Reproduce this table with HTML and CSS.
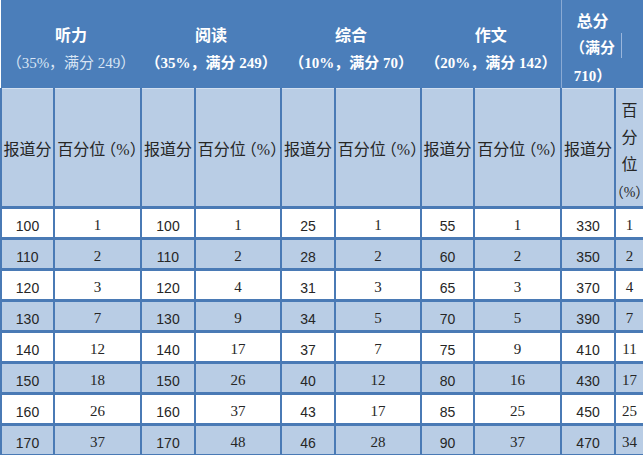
FILE: index.html
```html
<!DOCTYPE html>
<html lang="zh">
<head>
<meta charset="utf-8">
<title>报道分与百分位</title>
<link rel="stylesheet" href="styles.css">
</head>
<body>
<table class="score-table">
  <colgroup>
    <col class="c-score"><col class="c-pct">
    <col class="c-score2"><col class="c-pct2">
    <col class="c-score2"><col class="c-pct2">
    <col class="c-score"><col class="c-pct">
    <col class="c-score2"><col class="c-last">
  </colgroup>
  <thead>
    <tr class="head1">
      <th colspan="2"><div class="cell"><div class="title">听力</div><div class="sub light">（35%，满分 249）</div></div></th>
      <th colspan="2"><div class="cell"><div class="title">阅读</div><div class="sub">（35%，满分 249）</div></div></th>
      <th colspan="2"><div class="cell"><div class="title">综合</div><div class="sub">（10%，满分 70）</div></div></th>
      <th colspan="2" class="divide"><div class="cell"><div class="title">作文</div><div class="sub">（20%，满分 142）</div></div></th>
      <th colspan="2"><div class="cell total"><div class="title">总分</div><div class="sub mark">（满分</div><div class="sub">710）</div></div></th>
    </tr>
    <tr class="head2">
      <th>报道分</th><th>百分位<span class="paren">（%）</span></th>
      <th>报道分</th><th>百分位<span class="paren">（%）</span></th>
      <th>报道分</th><th>百分位<span class="paren">（%）</span></th>
      <th>报道分</th><th>百分位<span class="paren">（%）</span></th>
      <th>报道分</th><th class="wrap">百分位<span class="narrow">（%）</span></th>
    </tr>
  </thead>
  <tbody>
    <tr class="odd"><td class="n">100</td><td class="p">1</td><td class="n">100</td><td class="p">1</td><td class="n">25</td><td class="p">1</td><td class="n">55</td><td class="p">1</td><td class="n">330</td><td class="p">1</td></tr>
    <tr class="even"><td class="n">110</td><td class="p">2</td><td class="n">110</td><td class="p">2</td><td class="n">28</td><td class="p">2</td><td class="n">60</td><td class="p">2</td><td class="n">350</td><td class="p">2</td></tr>
    <tr class="odd"><td class="n">120</td><td class="p">3</td><td class="n">120</td><td class="p">4</td><td class="n">31</td><td class="p">3</td><td class="n">65</td><td class="p">3</td><td class="n">370</td><td class="p">4</td></tr>
    <tr class="even"><td class="n">130</td><td class="p">7</td><td class="n">130</td><td class="p">9</td><td class="n">34</td><td class="p">5</td><td class="n">70</td><td class="p">5</td><td class="n">390</td><td class="p">7</td></tr>
    <tr class="odd"><td class="n">140</td><td class="p">12</td><td class="n">140</td><td class="p">17</td><td class="n">37</td><td class="p">7</td><td class="n">75</td><td class="p">9</td><td class="n">410</td><td class="p">11</td></tr>
    <tr class="even"><td class="n">150</td><td class="p">18</td><td class="n">150</td><td class="p">26</td><td class="n">40</td><td class="p">12</td><td class="n">80</td><td class="p">16</td><td class="n">430</td><td class="p">17</td></tr>
    <tr class="odd"><td class="n">160</td><td class="p">26</td><td class="n">160</td><td class="p">37</td><td class="n">43</td><td class="p">17</td><td class="n">85</td><td class="p">25</td><td class="n">450</td><td class="p">25</td></tr>
    <tr class="even"><td class="n">170</td><td class="p">37</td><td class="n">170</td><td class="p">48</td><td class="n">46</td><td class="p">28</td><td class="n">90</td><td class="p">37</td><td class="n">470</td><td class="p">34</td></tr>
  </tbody>
</table>
</body>
</html>
```

FILE: styles.css
```css
html, body {
  margin: 0;
  padding: 0;
  background: #ffffff;
}

body {
  width: 643px;
  height: 455px;
  overflow: hidden;
  font-family: "Liberation Serif", "Noto Sans CJK SC", serif;
  color: #222222;
}

.score-table {
  border-collapse: collapse;
  table-layout: fixed;
  width: 643px;
}

.c-score { width: 53px; }
.c-pct { width: 87px; }
.c-score2 { width: 54px; }
.c-pct2 { width: 86px; }
.c-last { width: 29px; }

/* ---------- first header row ---------- */
.head1 th {
  background: #4b7eba;
  color: #ffffff;
  padding: 0;
  vertical-align: top;
  border-bottom: 1px solid #d3e0f0;
  font-weight: 400;
}

.head1 th.divide {
  border-right: 1px solid #8aaad4;
}

.head1 .cell {
  height: 88px;
  box-sizing: border-box;
  padding-top: 20px;
  text-align: center;
  line-height: 29px;
}

.head1 .title {
  font-family: "Noto Sans CJK SC", sans-serif;
  font-size: 16px;
  font-weight: 700;
}

.head1 .sub {
  font-family: "Liberation Serif", "Noto Sans CJK SC", serif;
  font-size: 15px;
  font-weight: 700;
  white-space: nowrap;
}

.head1 .sub.light {
  font-weight: 400;
  color: #d9e5f4;
}

.head1 .cell.total {
  width: 62px;
  padding-top: 6px;
  line-height: 28px;
  position: relative;
}

.head1 .cell.total::after {
  content: "";
  position: absolute;
  left: 59px;
  top: 33px;
  width: 1px;
  height: 25px;
  background: #9ab6dc;
}

/* ---------- second header row ---------- */
.head2 th {
  height: 112px;
  padding: 4px 0 0 0;
  background: #b9cde5;
  font-weight: 400;
  font-size: 16px;
  line-height: 27px;
  white-space: nowrap;
  text-align: center;
  vertical-align: middle;
  color: #262626;
  border-left: 2px solid #4a7ab5;
  border-right: 2px solid #4a7ab5;
  border-bottom: 3px solid #4a7ab5;
}

.paren {
  font-feature-settings: "halt";
  margin-left: 3px;
}

.head2 th.wrap {
  height: 108px;
  white-space: normal;
  word-break: break-all;
  vertical-align: top;
  padding-top: 8px;
}

.narrow {
  font-size: 14px;
  font-feature-settings: "halt";
  white-space: nowrap;
}

/* ---------- body rows ---------- */
tbody tr {
  height: 31px;
}

tbody td {
  padding: 5px 0 0 0;
  text-align: center;
  vertical-align: middle;
  border: 2px solid #4a7ab5;
  border-top-width: 3px;
  border-bottom-width: 3px;
  color: #262626;
}

tbody tr.odd td { background: #ffffff; }
tbody tr.even td { background: #b9cde5; }

td.n {
  font-family: "Liberation Sans", "Noto Sans CJK SC", sans-serif;
  font-size: 14px;
}

td.p {
  font-family: "Liberation Serif", "Noto Sans CJK SC", serif;
  font-size: 15px;
}
```
